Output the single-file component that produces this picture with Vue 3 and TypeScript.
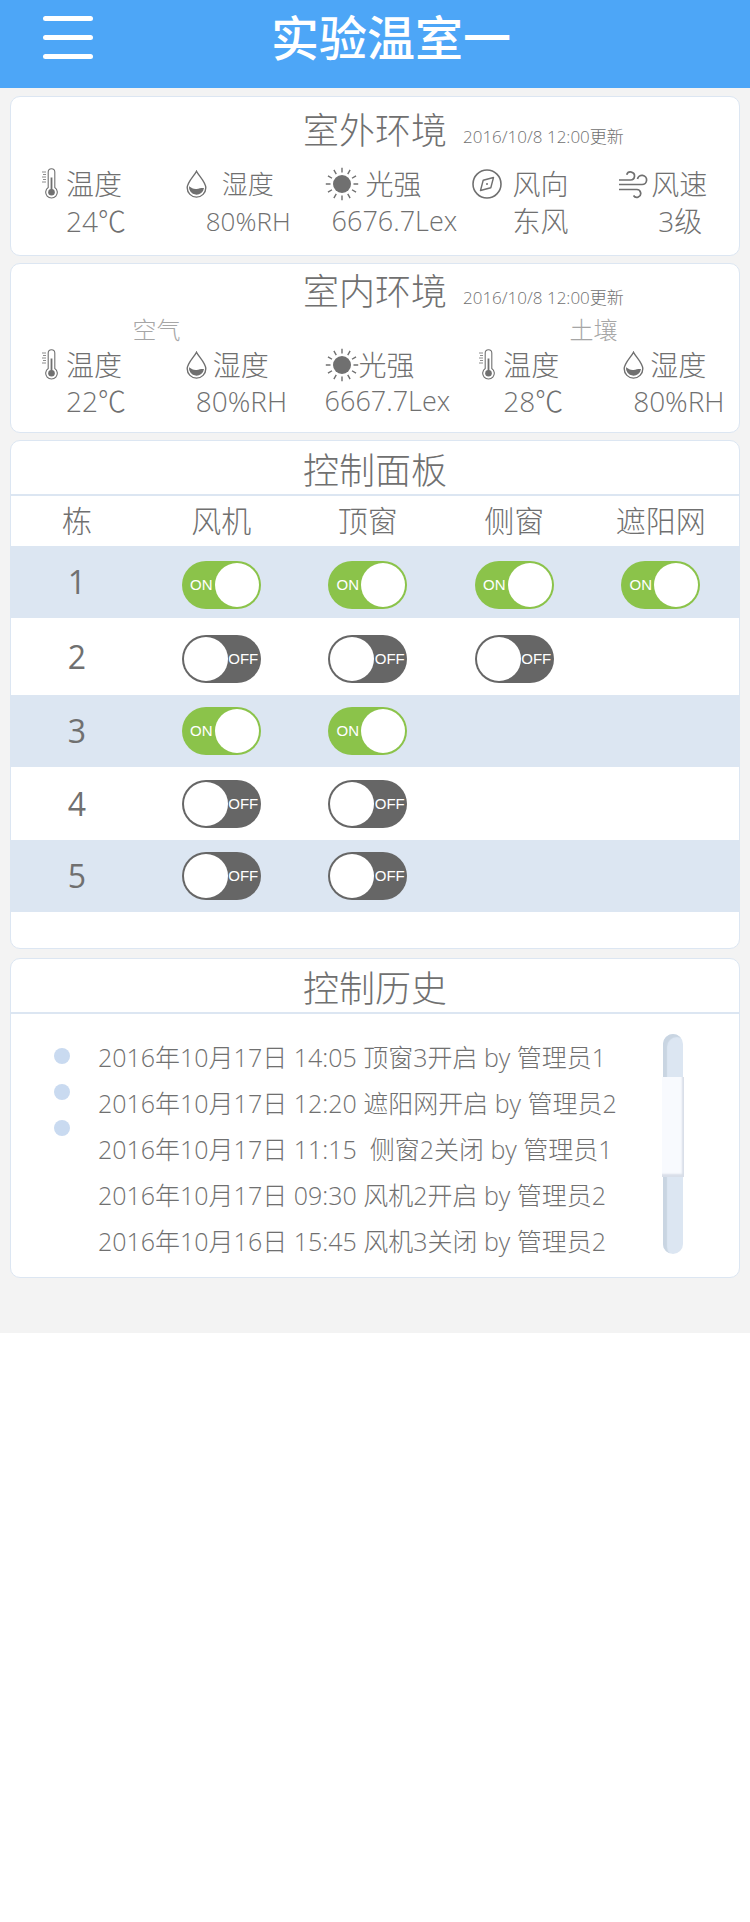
<script setup lang="ts">
import { reactive } from 'vue'

type IconName = 'temp' | 'drop' | 'sun' | 'compass' | 'wind'
interface Reading {
  icon: IconName
  label: string
  value: string
}
interface Row {
  id: number
  switches: boolean[]
}

const outdoor: Reading[] = [
  { icon: 'temp', label: '温度', value: '24℃' },
  { icon: 'drop', label: '湿度', value: '80%RH' },
  { icon: 'sun', label: '光强', value: '6676.7Lex' },
  { icon: 'compass', label: '风向', value: '东风' },
  { icon: 'wind', label: '风速', value: '3级' },
]
const indoor: Reading[] = [
  { icon: 'temp', label: '温度', value: '22℃' },
  { icon: 'drop', label: '湿度', value: '80%RH' },
  { icon: 'sun', label: '光强', value: '6667.7Lex' },
  { icon: 'temp', label: '温度', value: '28℃' },
  { icon: 'drop', label: '湿度', value: '80%RH' },
]
const groups = [
  { name: 'outdoor', title: '室外环境', updated: '2016/10/8 12:00更新', zones: [] as string[], readings: outdoor },
  { name: 'indoor', title: '室内环境', updated: '2016/10/8 12:00更新', zones: ['空气', '土壤'], readings: indoor },
]

const devices = ['风机', '顶窗', '侧窗', '遮阳网']
const rows = reactive<Row[]>([
  { id: 1, switches: [true, true, true, true] },
  { id: 2, switches: [false, false, false] },
  { id: 3, switches: [true, true] },
  { id: 4, switches: [false, false] },
  { id: 5, switches: [false, false] },
])

const history = [
  '2016年10月17日 14:05 顶窗3开启 by 管理员1',
  '2016年10月17日 12:20 遮阳网开启 by 管理员2',
  '2016年10月17日 11:15  侧窗2关闭 by 管理员1',
  '2016年10月17日 09:30 风机2开启 by 管理员2',
  '2016年10月16日 15:45 风机3关闭 by 管理员2',
]
const rays = Array.from({ length: 12 }, (_, i) => i * 30)
</script>

<template>
  <div class="page">
    <header class="topbar">
      <button class="menu" type="button" aria-label="菜单">
        <span></span><span></span><span></span>
      </button>
      <h1>实验温室一</h1>
    </header>

    <main>
      <section v-for="g in groups" :key="g.name" class="panel env" :class="g.name">
        <div class="env-head">
          <h2>{{ g.title }}</h2>
          <time>{{ g.updated }}</time>
        </div>
        <div v-if="g.zones.length" class="zones">
          <span v-for="z in g.zones" :key="z">{{ z }}</span>
        </div>
        <dl class="readings">
          <div v-for="(r, i) in g.readings" :key="i" class="reading" :class="r.icon">
            <dt>
              <svg v-if="r.icon === 'temp'" class="icon" width="16" height="32" viewBox="0 0 16 32" fill="none" stroke="currentColor">
                <path d="M0 4h4M1 6.500h3M0 9h4M1 11.500h3M0 14h4" stroke-width="0.8" />
                <path d="M6.200 19.500V4a3.300 3.300 0 0 1 6.600 0V19.500a5.800 5.800 0 1 1-6.600 0z" stroke-width="1.100" />
                <path d="M9.500 9.500V22" stroke-width="1.800" />
                <circle cx="9.500" cy="24.300" r="3.300" fill="currentColor" stroke="none" />
              </svg>
              <svg v-else-if="r.icon === 'drop'" class="icon" width="21" height="28" viewBox="0 0 21 28">
                <path d="M10.500 1.200C8.500 5.500 1.200 12 1.200 17.800a9.300 9.300 0 0 0 18.600 0C19.800 12 12.500 5.500 10.500 1.200z" fill="none" stroke="currentColor" stroke-width="1.400" />
                <path d="M3 16.200c2.500 1.500 4.500 3 7.500 2.700 2.500-.3 4.500-1 7.500-.9a7.500 7.500 0 0 1-15-1.800z" fill="currentColor" />
              </svg>
              <svg v-else-if="r.icon === 'sun'" class="icon" width="34" height="34" viewBox="0 0 34 34">
                <circle cx="17" cy="17" r="9" fill="currentColor" />
                <path v-for="a in rays" :key="a" d="M17 .8v4.700" :transform="`rotate(${a} 17 17)`" stroke="currentColor" stroke-width="1.400" />
              </svg>
              <svg v-else-if="r.icon === 'compass'" class="icon" width="30" height="30" viewBox="0 0 30 30" fill="none" stroke="currentColor">
                <circle cx="15" cy="15" r="14" stroke-width="1.600" />
                <path d="M21.500 8.500L18.800 18.800 8.500 21.500 11.200 11.200z" stroke-width="1.400" stroke-linejoin="round" />
                <circle cx="15" cy="15" r="1" fill="currentColor" stroke="none" />
              </svg>
              <svg v-else class="icon" width="30" height="30" viewBox="0 0 30 30" fill="none" stroke="currentColor" stroke-width="1.700">
                <path d="M1 11H12.500A4 4 0 1 0 8.700 5.800" />
                <path d="M1 15.500H24A4.600 4.600 0 1 0 19.500 10" />
                <path d="M1 20.500H18.500A3.900 3.900 0 1 1 15.500 26.500" />
              </svg>
              <span>{{ r.label }}</span>
            </dt>
            <dd>{{ r.value }}</dd>
          </div>
        </dl>
      </section>

      <section class="panel control">
        <h2 class="ruled">控制面板</h2>
        <table>
          <thead>
            <tr>
              <th scope="col">栋</th>
              <th v-for="d in devices" :key="d" scope="col">{{ d }}</th>
            </tr>
          </thead>
          <tbody>
            <tr v-for="row in rows" :key="row.id">
              <th scope="row">{{ row.id }}</th>
              <td v-for="(d, i) in devices" :key="d">
                <label v-if="i < row.switches.length" class="switch">
                  <input v-model="row.switches[i]" type="checkbox" role="switch" :aria-label="`${row.id}栋${d}`" />
                  <span class="track" :class="{ on: row.switches[i] }">
                    <span class="state">{{ row.switches[i] ? 'ON' : 'OFF' }}</span>
                    <span class="knob"></span>
                  </span>
                </label>
              </td>
            </tr>
          </tbody>
        </table>
      </section>

      <section class="panel log">
        <h2 class="ruled">控制历史</h2>
        <div class="log-body">
          <div class="dots" aria-hidden="true"><i></i><i></i><i></i></div>
          <ul>
            <li v-for="h in history" :key="h">{{ h }}</li>
          </ul>
          <div class="scroll" aria-hidden="true"><div class="thumb"></div></div>
        </div>
      </section>
    </main>
  </div>
</template>

<style>
body {
  margin: 0;
  background: #fff;
}
</style>

<style scoped>
.page {
  background: #f3f3f3;
  color: #707070;
  font-family: "Open Sans", "Noto Sans CJK SC", sans-serif;
  font-weight: 300;
  padding-bottom: 55px;
}
h1, h2, dl, dd, ul {
  margin: 0;
  padding: 0;
  font-weight: 300;
}
.topbar {
  display: grid;
  grid-template-columns: 1fr auto 1fr;
  align-items: start;
  height: 88px;
  background: #4da6f7;
  color: #fff;
}
.menu {
  display: flex;
  flex-direction: column;
  gap: 14px;
  width: 50px;
  margin: 16px 0 0 43px;
  padding: 0;
  border: 0;
  background: none;
}
.menu span {
  height: 5px;
  border-radius: 3px;
  background: #fff;
}
h1 {
  margin-left: 32px;
  font-size: 48px;
  line-height: 76px;
  font-weight: 500;
}
main {
  display: flex;
  flex-direction: column;
  gap: 7px;
  padding: 8px 10px 0;
}
.panel {
  border: 1px solid #dce6f2;
  border-radius: 10px;
  background: #fff;
  overflow: hidden;
}
h2 {
  font-size: 36px;
  line-height: 54px;
}
.env {
  box-sizing: border-box;
  min-height: 160px;
}
.env-head {
  display: grid;
  grid-template-columns: 1fr auto 1fr;
  column-gap: 16px;
  align-items: end;
}
.env-head h2 {
  grid-column: 2;
}
time {
  font-size: 17px;
  line-height: 43px;
}
.outdoor {
  padding-top: 7px;
}
.indoor {
  min-height: 170px;
  padding-top: 1px;
}
.zones {
  display: grid;
  grid-template-columns: 2fr 1fr 2fr;
  font-size: 24px;
  line-height: 22px;
  color: #a6a6a6;
  text-align: center;
}
.zones span:last-child {
  grid-column: 3;
}
.readings {
  display: grid;
  grid-template-columns: 144fr 139fr 148fr 146fr 121fr;
  padding-left: 31px;
}
.outdoor .readings {
  padding-top: 7px;
}
.indoor .readings {
  grid-template-columns: 144fr 139fr 155fr 144fr 116fr;
  padding-top: 5px;
}
.reading {
  font-size: 28px;
  line-height: 38px;
  white-space: nowrap;
}
dd {
  line-height: 36px;
}
.indoor dd {
  line-height: 34px;
}
dt {
  display: flex;
  align-items: center;
}
.icon {
  flex: none;
}
.temp dt { gap: 8px; }
.temp dd { margin-left: 24px; }
.drop dt { gap: 15px; }
.drop dd { margin-left: 20px; }
.outdoor .drop { font-size: 26px; }
.sun dt { gap: 7px; }
.sun dd { margin-left: 7px; font-size: 27px; }
.compass dt { gap: 10px; }
.compass dd { margin-left: 40px; }
.wind dt { gap: 3px; }
.wind dd { margin-left: 40px; }
.indoor .drop dt { gap: 6px; }
.indoor .drop dd { margin-left: 10px; }
.indoor .sun dt { gap: 0; }
.indoor .sun dd { margin-left: 0; }

.ruled {
  padding-top: 7px;
  border-bottom: 2px solid #dce6f2;
  line-height: 46px;
  text-align: center;
}
.control {
  padding-bottom: 36px;
}
table {
  width: 100%;
  table-layout: fixed;
  border-collapse: collapse;
}
th, td {
  height: 72px;
  padding: 0 10px 0 0;
  text-align: center;
  font-weight: 300;
}
td {
  box-sizing: border-box;
}
tr:nth-child(-n+2) td {
  padding-top: 5px;
}
th:first-child {
  width: 132px;
}
thead th {
  height: 50px;
  font-size: 30px;
  line-height: 36px;
}
tbody th {
  font-size: 32px;
  line-height: 40px;
  font-weight: 500;
}
tbody tr:nth-child(odd) {
  background: #dce6f2;
}
tbody tr:nth-child(2) th,
tbody tr:nth-child(2) td {
  height: 77px;
}
tbody tr:nth-child(4) th,
tbody tr:nth-child(4) td {
  height: 73px;
}
.switch {
  display: inline-block;
  vertical-align: middle;
  cursor: pointer;
}
.switch input {
  position: absolute;
  opacity: 0;
  pointer-events: none;
}
.track {
  display: flex;
  flex-direction: row-reverse;
  align-items: center;
  box-sizing: border-box;
  width: 79px;
  height: 48px;
  padding: 2px;
  border-radius: 24px;
  background: #666;
  color: #fff;
}
.track.on {
  flex-direction: row;
  background: #8bc34a;
}
.state {
  flex: 1;
  text-align: center;
  font: 400 15px/20px "Liberation Sans", sans-serif;
}
.on .state {
  padding-left: 4px;
}
.knob {
  flex: none;
  width: 44px;
  height: 44px;
  border-radius: 50%;
  background: #fff;
}
.log {
  margin-top: 2px;
}
.log-body {
  display: flex;
  align-items: flex-start;
  padding: 20px 56px 13px 43px;
}
.dots {
  display: flex;
  flex-direction: column;
  gap: 20px;
  padding-top: 14px;
}
.dots i {
  width: 16px;
  height: 16px;
  border-radius: 50%;
  background: #c9daf0;
}
ul {
  flex: 1;
  margin-left: 28px;
  list-style: none;
  font-size: 25px;
  line-height: 46px;
  white-space: pre;
}
.scroll {
  box-sizing: border-box;
  width: 20px;
  height: 220px;
  padding-top: 43px;
  border-radius: 10px;
  background: #dce6f2;
  box-shadow: inset 4px 3px 1px #c9d5e2;
}
.thumb {
  width: 22px;
  height: 100px;
  margin-left: -1px;
  background: #f8fafe;
  box-shadow: inset -2px -3px 2px #d8dee8;
}
</style>
